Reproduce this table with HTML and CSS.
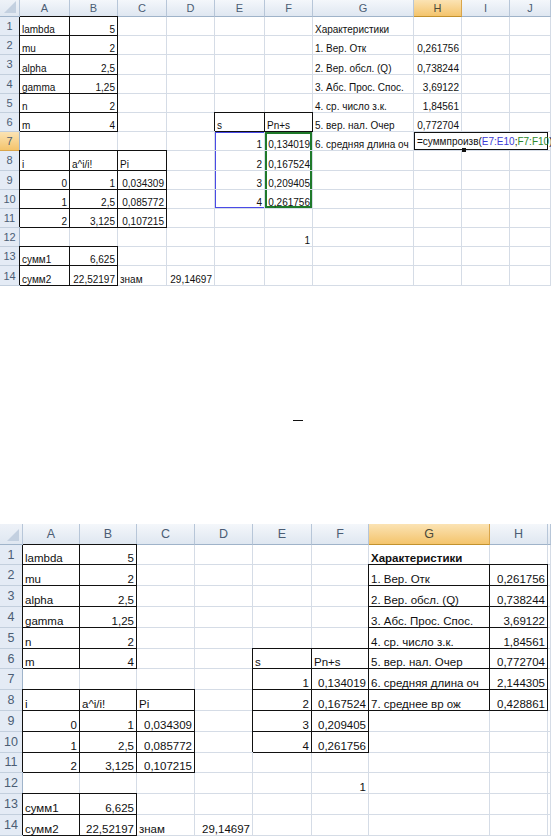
FILE: index.html
```html
<!DOCTYPE html>
<html lang="ru">
<head>
<meta charset="utf-8">
<title>Характеристики</title>
<link rel="stylesheet" href="styles.css">
</head>
<body>
<table class="sheet top">
  <colgroup>
    <col class="w-rh"><col class="w-a"><col class="w-b"><col class="w-c"><col class="w-d"><col class="w-e"><col class="w-f"><col class="w-g"><col class="w-h"><col class="w-i"><col class="w-j">
  </colgroup>
  <tr class="hdr">
    <th class="corner"></th><th>A</th><th>B</th><th>C</th><th>D</th><th>E</th><th>F</th><th>G</th><th class="hl">H</th><th>I</th><th>J</th>
  </tr>
  <tr><th class="rh">1</th><td class="b">lambda</td><td class="b r">5</td><td></td><td></td><td></td><td></td><td>Характеристики</td><td></td><td></td><td></td></tr>
  <tr><th class="rh">2</th><td class="b">mu</td><td class="b r">2</td><td></td><td></td><td></td><td></td><td>1. Вер. Отк</td><td class="r">0,261756</td><td></td><td></td></tr>
  <tr><th class="rh">3</th><td class="b">alpha</td><td class="b r">2,5</td><td></td><td></td><td></td><td></td><td>2. Вер. обсл. (Q)</td><td class="r">0,738244</td><td></td><td></td></tr>
  <tr><th class="rh">4</th><td class="b">gamma</td><td class="b r">1,25</td><td></td><td></td><td></td><td></td><td>3. Абс. Прос. Спос.</td><td class="r">3,69122</td><td></td><td></td></tr>
  <tr><th class="rh">5</th><td class="b">n</td><td class="b r">2</td><td></td><td></td><td></td><td></td><td>4. ср. число з.к.</td><td class="r">1,84561</td><td></td><td></td></tr>
  <tr><th class="rh">6</th><td class="b">m</td><td class="b r">4</td><td></td><td></td><td class="b">s</td><td class="b">Pn+s</td><td>5. вер. нал. Очер</td><td class="r">0,772704</td><td></td><td></td></tr>
  <tr><th class="rh hl">7</th><td></td><td></td><td></td><td></td><td class="r se se-t">1</td><td class="r sf sf-t">0,134019</td><td>6. средняя длина оч</td><td colspan="3" class="edit-cell"><div class="editor">=суммпроизв(<span class="ref-e">E7:E10</span>;<span class="ref-f">F7:F10</span>)</div></td></tr>
  <tr><th class="rh">8</th><td class="b">i</td><td class="b">a^i/i!</td><td class="b">Pi</td><td></td><td class="r se">2</td><td class="r sf">0,167524</td><td></td><td></td><td></td><td></td></tr>
  <tr><th class="rh">9</th><td class="b r">0</td><td class="b r">1</td><td class="b r">0,034309</td><td></td><td class="r se">3</td><td class="r sf">0,209405</td><td></td><td></td><td></td><td></td></tr>
  <tr><th class="rh">10</th><td class="b r">1</td><td class="b r">2,5</td><td class="b r">0,085772</td><td></td><td class="r se se-b">4</td><td class="r sf sf-b">0,261756</td><td></td><td></td><td></td><td></td></tr>
  <tr><th class="rh">11</th><td class="b r">2</td><td class="b r">3,125</td><td class="b r">0,107215</td><td></td><td></td><td></td><td></td><td></td><td></td><td></td></tr>
  <tr><th class="rh">12</th><td></td><td></td><td></td><td></td><td></td><td class="r">1</td><td></td><td></td><td></td><td></td></tr>
  <tr><th class="rh">13</th><td class="b">сумм1</td><td class="b r">6,625</td><td></td><td></td><td></td><td></td><td></td><td></td><td></td><td></td></tr>
  <tr><th class="rh">14</th><td class="b">сумм2</td><td class="b r">22,52197</td><td>знам</td><td class="r">29,14697</td><td></td><td></td><td></td><td></td><td></td><td></td></tr>
</table>

<div class="gap">
  <div class="dash"></div>
</div>

<table class="sheet bot">
  <colgroup>
    <col class="w-rh"><col class="w-a"><col class="w-b"><col class="w-c"><col class="w-d"><col class="w-e"><col class="w-f"><col class="w-g"><col class="w-h"><col class="w-i">
  </colgroup>
  <tr class="hdr">
    <th class="corner"></th><th>A</th><th>B</th><th>C</th><th>D</th><th>E</th><th>F</th><th class="hl">G</th><th>H</th><th></th>
  </tr>
  <tr><th class="rh">1</th><td class="b">lambda</td><td class="b r">5</td><td></td><td></td><td></td><td></td><td class="bold">Характеристики</td><td></td><td></td></tr>
  <tr><th class="rh">2</th><td class="b">mu</td><td class="b r">2</td><td></td><td></td><td></td><td></td><td class="b">1. Вер. Отк</td><td class="b r">0,261756</td><td></td></tr>
  <tr><th class="rh">3</th><td class="b">alpha</td><td class="b r">2,5</td><td></td><td></td><td></td><td></td><td class="b">2. Вер. обсл. (Q)</td><td class="b r">0,738244</td><td></td></tr>
  <tr><th class="rh">4</th><td class="b">gamma</td><td class="b r">1,25</td><td></td><td></td><td></td><td></td><td class="b">3. Абс. Прос. Спос.</td><td class="b r">3,69122</td><td></td></tr>
  <tr><th class="rh">5</th><td class="b">n</td><td class="b r">2</td><td></td><td></td><td></td><td></td><td class="b">4. ср. число з.к.</td><td class="b r">1,84561</td><td></td></tr>
  <tr><th class="rh">6</th><td class="b">m</td><td class="b r">4</td><td></td><td></td><td class="b">s</td><td class="b">Pn+s</td><td class="b">5. вер. нал. Очер</td><td class="b r">0,772704</td><td></td></tr>
  <tr><th class="rh">7</th><td></td><td></td><td></td><td></td><td class="b r">1</td><td class="b r">0,134019</td><td class="b">6. средняя длина оч</td><td class="b r">2,144305</td><td></td></tr>
  <tr><th class="rh">8</th><td class="b">i</td><td class="b">a^i/i!</td><td class="b">Pi</td><td></td><td class="b r">2</td><td class="b r">0,167524</td><td class="b">7. среднее вр ож</td><td class="b r">0,428861</td><td></td></tr>
  <tr><th class="rh">9</th><td class="b r">0</td><td class="b r">1</td><td class="b r">0,034309</td><td></td><td class="b r">3</td><td class="b r">0,209405</td><td></td><td></td><td></td></tr>
  <tr><th class="rh">10</th><td class="b r">1</td><td class="b r">2,5</td><td class="b r">0,085772</td><td></td><td class="b r">4</td><td class="b r">0,261756</td><td></td><td></td><td></td></tr>
  <tr><th class="rh">11</th><td class="b r">2</td><td class="b r">3,125</td><td class="b r">0,107215</td><td></td><td></td><td></td><td></td><td></td><td></td></tr>
  <tr><th class="rh">12</th><td></td><td></td><td></td><td></td><td></td><td class="r">1</td><td></td><td></td><td></td></tr>
  <tr><th class="rh">13</th><td class="b">сумм1</td><td class="b r">6,625</td><td></td><td></td><td></td><td></td><td></td><td></td><td></td></tr>
  <tr><th class="rh">14</th><td class="b">сумм2</td><td class="b r">22,52197</td><td>знам</td><td class="r">29,14697</td><td></td><td></td><td></td><td></td><td></td></tr>
</table>
</body>
</html>
```

FILE: styles.css
```css
html, body {
  margin: 0;
  padding: 0;
  background: #fff;
}
body {
  width: 551px;
  font-family: "Liberation Sans", Arial, sans-serif;
  color: #111;
}

.sheet {
  border-collapse: separate;
  border-spacing: 0;
  table-layout: fixed;
  width: 551px;
}
.sheet td,
.sheet th {
  padding: 0 2px;
  border-right: 1px solid #d5dce6;
  border-bottom: 1px solid #d5dce6;
  white-space: nowrap;
  overflow: visible;
  vertical-align: bottom;
  text-align: left;
  font-weight: normal;
}

/* header row */
.sheet .hdr th {
  text-align: center;
  vertical-align: middle;
  color: #4b5d74;
  background: linear-gradient(#f4f7fb, #dfe7f1);
  border-right: 1px solid #b7c6d8;
  border-bottom: 1px solid #9fb3c9;
}
.sheet .hdr th.hl {
  background: linear-gradient(#fbe3b4, #f4c46c);
  color: #4a4a3a;
  border-right-color: #d9a54a;
  border-bottom-color: #c2912d;
}
.sheet th.corner {
  position: relative;
  background: linear-gradient(#eef2f8, #dfe7f1);
}
.sheet th.corner::after {
  content: "";
  position: absolute;
  right: 3px;
  bottom: 3px;
  width: 0;
  height: 0;
  border-left: 12px solid transparent;
  border-bottom: 12px solid #c3d0e0;
}

/* row header */
.sheet th.rh {
  text-align: center;
  vertical-align: middle;
  color: #4b5d74;
  background: #e4ebf5;
  border-right: 1px solid #9fb3c9;
  border-bottom: 1px solid #c3cfdd;
  padding: 0;
}
.sheet th.rh.hl {
  background: linear-gradient(#fbe3b4, #f4c46c);
  border-bottom-color: #d9a54a;
}

.sheet td.r { text-align: right; }
.sheet td.bold { font-weight: bold; }

/* thin black cell borders */
.sheet td.b {
  border-right-color: #111;
  border-bottom-color: #111;
  box-shadow: -1px -1px 0 #111, 0 -1px 0 #111;
}

/* top sheet sizing */
.top { font-size: 10px; }
.top .hdr { height: 17px; }
.top tr { height: 19.2px; }
.top .w-rh { width: 20px; }
.top .w-a { width: 50px; }
.top .w-b { width: 48px; }
.top .w-c { width: 49px; }
.top .w-d { width: 48px; }
.top .w-e { width: 50px; }
.top .w-f { width: 48px; }
.top .w-g { width: 101px; }
.top .w-h { width: 48px; }
.top .w-i { width: 48px; }
.top .w-j { width: 41px; }
.top th.rh { font-size: 11px; }
.top .hdr th { font-size: 11px; }

/* formula reference highlights */
.top td.se { box-shadow: inset 1px 0 0 #4a4ae6; }
.top td.se-t { box-shadow: inset 1px 1px 0 #4a4ae6; }
.top td.se-b { box-shadow: inset 1px -1px 0 #4a4ae6; }
.top td.sf { box-shadow: inset 2px 0 0 #1f7a2a, inset -2px 0 0 #1f7a2a; }
.top td.sf-t { box-shadow: inset 2px 0 0 #1f7a2a, inset -2px 0 0 #1f7a2a, inset 0 2px 0 #1f7a2a; }
.top td.sf-b { box-shadow: inset 2px 0 0 #1f7a2a, inset -2px 0 0 #1f7a2a, inset 0 -2px 0 #1f7a2a; }

.top td.edit-cell {
  padding: 0;
  vertical-align: top;
}
.editor {
  position: relative;
  width: 134px;
  height: 18px;
  box-sizing: border-box;
  border: 1px solid #111;
  padding: 3px 0 0 2px;
  line-height: 12px;
  background: #fff;
}
.editor::after {
  content: "";
  position: absolute;
  left: 47px;
  bottom: -3px;
  width: 4px;
  height: 4px;
  background: #111;
}
.ref-e { color: #3b3bd6; }
.ref-f { color: #2c8a2c; }

/* gap between the two screenshots */
.gap {
  height: 238px;
  padding-top: 134px;
  box-sizing: border-box;
}
.dash {
  margin-left: 293px;
  width: 10px;
  height: 1px;
  background: #111;
}

/* bottom sheet sizing */
.bot { font-size: 11.5px; }
.bot .hdr { height: 21px; }
.bot tr { height: 20.8px; }
.bot .w-rh { width: 23px; }
.bot .w-a { width: 57px; }
.bot .w-b { width: 57px; }
.bot .w-c { width: 58px; }
.bot .w-d { width: 58px; }
.bot .w-e { width: 59px; }
.bot .w-f { width: 57px; }
.bot .w-g { width: 121px; }
.bot .w-h { width: 58px; }
.bot .w-i { width: 3px; }
.bot th.rh { font-size: 12.5px; }
.bot .hdr th { font-size: 12.5px; }
.bot td.w-i, .bot tr > :last-child { padding: 0; }
```
